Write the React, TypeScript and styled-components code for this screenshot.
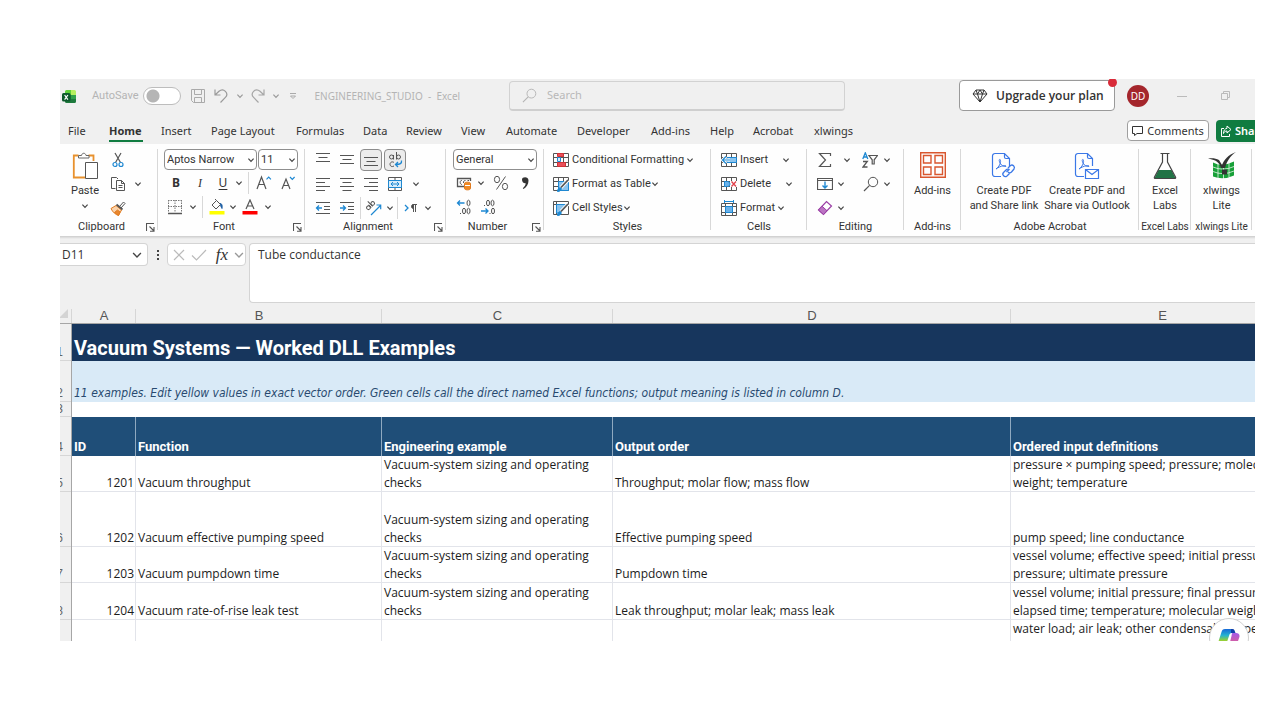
import React from 'react';
import styled, { createGlobalStyle, css } from 'styled-components';

const ui = '"Noto Sans", "Open Sans", sans-serif';
const compact = 'Roboto, "Open Sans", sans-serif';
const ink = '#333333';
const blue = '#1e88d2';

const GlobalStyle = createGlobalStyle`
  *, *::before, *::after { box-sizing: border-box; }
  body { margin: 0; background: #ffffff; }
  button, input, select, textarea { font: inherit; color: inherit; margin: 0; }
  button { border: 0; padding: 0; background: none; }
  svg { display: block; flex: none; }
`;

const Page = styled.main`
  display: flex;
  height: 100vh;
  padding: 79px 25px 79px 60px;
`;

const Window = styled.div`
  position: relative;
  display: flex;
  flex: 1;
  flex-direction: column;
  min-width: 0;
  overflow: hidden;
  background: #f0f0f0;
  color: ${ink};
  font: 11px/16px ${ui};
`;

/* ---------- title bar ---------- */

const TitleBar = styled.header`
  display: flex;
  flex: none;
  align-items: center;
  height: 33px;
  padding-right: 24px;
`;

const TitleLeft = styled.div`
  display: flex;
  flex: 0 0 449px;
  align-items: center;
  padding-left: 2px;
  color: #b4b4b4;
`;

const AutoSave = styled.label`
  display: flex;
  align-items: center;
  gap: 5px;
  margin: 0 9px 0 15px;
  font-family: ${compact};
`;

const Toggle = styled.input`
  appearance: none;
  width: 38px;
  height: 18px;
  border: 1px solid #bdbdbd;
  border-radius: 9px;
  background: radial-gradient(circle at 9px 8px, #b5b5b5 6px, #ffffff 7px);
`;

const QuickButton = styled.button<{ $w: number }>`
  display: flex;
  align-items: center;
  justify-content: center;
  width: ${(p) => p.$w}px;
  height: 20px;
`;

const FileTitle = styled.span`
  margin-left: 8px;
  font: 10px/16px ${ui};
  white-space: pre;
`;

const SearchBox = styled.label`
  display: flex;
  flex: 0 1 336px;
  align-items: center;
  gap: 10px;
  height: 30px;
  padding-left: 12px;
  border: 1px solid #d2d2d2;
  border-bottom: 2px solid #cfcfcf;
  border-radius: 4px;
  color: #b4b4b4;

  input {
    width: 100%;
    padding: 0;
    border: 0;
    outline: 0;
    background: none;
    &::placeholder { color: #b8b8b8; opacity: 1; }
  }
`;

const Spacer = styled.div`
  flex: 1;
`;

const Upgrade = styled.button`
  position: relative;
  display: flex;
  align-items: center;
  gap: 8px;
  width: 156px;
  height: 31px;
  padding-left: 12px;
  border: 1px solid #9a9a9a;
  border-radius: 4px;
  background: #ffffff;
  font: 600 12px/16px "Open Sans", sans-serif;
  white-space: nowrap;

  &::after {
    content: '';
    position: absolute;
    top: -3px;
    right: -3px;
    width: 9px;
    height: 9px;
    border-radius: 50%;
    background: #d92c3a;
  }
`;

const Avatar = styled.button`
  width: 22px;
  height: 22px;
  margin: 0 28px 0 12px;
  border-radius: 50%;
  background: #a4262c;
  color: #ffffff;
  font-size: 10px;
`;

const WindowButton = styled.button`
  & + & { margin-left: 33px; }
`;

/* ---------- tabs ---------- */

const TabBar = styled.nav`
  display: flex;
  flex: none;
  align-items: center;
  height: 32px;
  padding: 5px 0 0 8px;
`;

const Tab = styled.button<{ $w: number; $active?: boolean }>`
  width: ${(p) => p.$w}px;
  height: 22px;
  text-align: left;
  white-space: nowrap;
  ${(p) =>
    p.$active &&
    css`
      font-weight: 700;
      background: linear-gradient(#107c41, #107c41) 0 100% / 34px 2px no-repeat;
    `}
`;

const Comments = styled.button`
  display: flex;
  flex: none;
  align-items: center;
  justify-content: center;
  gap: 4px;
  width: 82px;
  height: 21px;
  border: 1px solid #9f9f9f;
  border-radius: 4px;
  background: #ffffff;
`;

const ShareClip = styled.div`
  flex: 0 0 39px;
  margin-left: 7px;
  overflow: hidden;
`;

const Share = styled.button`
  display: flex;
  align-items: center;
  gap: 3px;
  width: 72px;
  height: 22px;
  padding-left: 4px;
  border-radius: 4px;
  background: #107c41;
  color: #ffffff;
  font-weight: 600;
`;

/* ---------- ribbon ---------- */

const Ribbon = styled.section`
  display: flex;
  flex: none;
  height: 92px;
  padding-top: 4px;
  overflow: hidden;
  background: #fefefe;
  font-family: ${compact};
`;

const RibbonShadow = styled.div`
  flex: none;
  height: 3px;
  background: linear-gradient(#cccccc, #f0f0f0);
`;

const GroupBox = styled.div<{ $w: number }>`
  display: flex;
  flex: 0 0 ${(p) => p.$w}px;
  flex-direction: column;
  background: linear-gradient(#d8d8d8, #d8d8d8) 100% 1px / 1px 81px no-repeat;
`;

const GroupBody = styled.div<{ $row?: boolean }>`
  display: flex;
  flex-direction: ${(p) => (p.$row ? 'row' : 'column')};
  height: 71px;
`;

const GroupLabel = styled.div<{ $launch?: boolean; $small?: boolean }>`
  display: grid;
  grid-template-columns: ${(p) => (p.$launch ? '1fr 15px' : '1fr')};
  align-items: center;
  justify-items: center;
  height: 16px;
  font-size: ${(p) => (p.$small ? 10 : 11)}px;
  white-space: nowrap;
`;

const Row = styled.div<{ $pad?: number }>`
  display: flex;
  align-items: center;
  height: 24px;
  padding-left: ${(p) => p.$pad ?? 0}px;
`;

const Slot = styled.button<{ $w?: number; $on?: boolean }>`
  display: flex;
  flex: none;
  align-items: center;
  justify-content: center;
  width: ${(p) => p.$w ?? 24}px;
  height: 24px;
  ${(p) =>
    p.$on &&
    css`
      width: 22px;
      height: 22px;
      margin: 0 1px;
      border: 1px solid #8c8c8c;
      border-radius: 4px;
      background: #ececec;
    `}
`;

const Rule = styled.span<{ $gap?: number }>`
  width: 1px;
  height: 22px;
  margin: 0 ${(p) => p.$gap ?? 3}px;
  background: #d8d8d8;
`;

const Gap = styled.span<{ $w: number }>`
  flex: 0 0 ${(p) => p.$w}px;
`;

const Letter = styled.span<{ $bold?: boolean; $italic?: boolean; $under?: boolean }>`
  font: ${(p) => (p.$italic ? 'italic' : 'normal')} ${(p) => (p.$bold ? 700 : 400)} 12px/16px
    ${(p) => (p.$italic ? '"Liberation Serif", serif' : ui)};
  text-decoration: ${(p) => (p.$under ? 'underline' : 'none')};
  text-underline-offset: 2px;
`;

const PickBox = styled.label<{ $w: number }>`
  display: flex;
  align-items: center;
  width: ${(p) => p.$w}px;
  height: 21px;
  padding: 0 1px 0 2px;
  margin-right: 1px;
  border: 1px solid #8f8f8f;
  border-radius: 4px;
  background: #ffffff;

  select {
    appearance: none;
    flex: 1;
    min-width: 0;
    padding: 0;
    border: 0;
    outline: 0;
    background: none;
  }
`;

const WideButton = styled.button<{ $gap?: number }>`
  display: flex;
  align-items: center;
  height: 24px;
  white-space: nowrap;
  svg:first-child { margin-right: 3px; }
  svg:last-child { margin-left: ${(p) => p.$gap ?? 2}px; }
`;

const BigButton = styled.button<{ $w: number }>`
  display: flex;
  flex: none;
  flex-direction: column;
  align-items: center;
  width: ${(p) => p.$w}px;
  padding-top: 4px;
  line-height: 15px;
  white-space: nowrap;
  svg:first-child { margin-bottom: 3px; }
`;

const PasteLabel = styled.span`
  margin-bottom: 4px;
`;

const Stack = styled.div`
  display: flex;
  flex-direction: column;
`;

/* ---------- formula bar ---------- */

const FormulaBar = styled.section`
  display: flex;
  flex: none;
  align-items: flex-start;
  height: 67px;
  padding-top: 4px;
  font: 12px/18px "Open Sans", sans-serif;
`;

const NameBox = styled.label`
  display: flex;
  align-items: center;
  width: 88px;
  height: 23px;
  padding: 0 4px 0 2px;
  border: 1px solid #d4d4d4;
  border-left: 0;
  border-radius: 0 4px 4px 0;
  background: #ffffff;

  input {
    flex: 1;
    min-width: 0;
    padding: 0;
    border: 0;
    outline: 0;
  }
`;

const Dots = styled.span`
  display: flex;
  justify-content: center;
  width: 19px;
  padding-top: 6px;
`;

const FormulaTools = styled.div`
  display: flex;
  align-items: center;
  justify-content: space-between;
  width: 79px;
  height: 23px;
  padding: 0 0 0 4px;
  border: 1px solid #d4d4d4;
  border-radius: 4px;
  background: #ffffff;
`;

const Fx = styled.button`
  margin-left: 4px;
  font: italic 17px/18px "Liberation Serif", serif;
`;

const FormulaInput = styled.textarea`
  flex: 1;
  height: 60px;
  margin-left: 3px;
  padding: 2px 8px;
  border: 1px solid #d4d4d4;
  border-right: 0;
  border-radius: 4px 0 0 4px;
  outline: 0;
  background: #ffffff;
  resize: none;
`;

/* ---------- sheet ---------- */

const Sheet = styled.div`
  flex: 1;
  min-height: 0;
  overflow: hidden;
`;

const Grid = styled.table`
  width: 1266px;
  margin-left: -12px;
  border-spacing: 0;
  table-layout: fixed;
  background: #ffffff;
  color: #1c1c1c;
  font: 12px/18px "Open Sans", sans-serif;
`;

const Col = styled.col<{ $w: number }>`
  width: ${(p) => p.$w}px;
`;

const ColumnHead = styled.th`
  height: 18px;
  padding: 3px 0 0;
  border-bottom: 1px solid #a6a6a6;
  background: linear-gradient(#d6d6d6, #d6d6d6) 100% 100% / 1px 14px no-repeat #f0f0f0;
  color: #555555;
  font: 13px/14px "Liberation Sans", sans-serif;
`;

const Corner = styled(ColumnHead)`
  padding: 0 4px 3px 0;
  svg { margin-left: auto; }
`;

const Line = styled.tr<{ $h: number }>`
  height: ${(p) => p.$h}px;
`;

const RowHead = styled.th<{ $short?: boolean }>`
  padding: 0;
  border-right: 1px solid #a6a6a6;
  background: linear-gradient(#d6d6d6, #d6d6d6) 0 100% / 100% 1px no-repeat #f0f0f0;
  color: #666666;
  vertical-align: bottom;
  font: 12px/${(p) => (p.$short ? 15 : 18)}px "Liberation Sans", sans-serif;
`;

const Cell = styled.td<{ $right?: boolean; $top?: boolean }>`
  padding: 0 2px;
  overflow: hidden;
  box-shadow: inset -1px -1px #e2e4ea;
  text-align: ${(p) => (p.$right ? 'right' : 'left')};
  vertical-align: ${(p) => (p.$top ? 'top' : 'bottom')};
  white-space: pre;
`;

const TitleCell = styled.td`
  padding: 0 2px;
  background: #17365d;
  color: #ffffff;
  vertical-align: bottom;
  font: 700 20px/26px Roboto, sans-serif;
`;

const NoteCell = styled.td`
  padding: 0 2px;
  background: #d9eaf7;
  color: #294a70;
  vertical-align: bottom;
  font: italic 12px/18px "DejaVu Sans Condensed", "DejaVu Sans", sans-serif;
`;

const FieldHead = styled.th`
  padding: 0 2px;
  background: #1f4e78;
  box-shadow: inset -1px 0 #8fa9c0;
  color: #ffffff;
  text-align: left;
  vertical-align: bottom;
  font: 700 13px/18px Roboto, sans-serif;
`;

const Copilot = styled.button`
  position: absolute;
  right: 6px;
  bottom: -17px;
  display: flex;
  justify-content: center;
  width: 40px;
  height: 40px;
  padding-top: 9px;
  border: 1px solid #d0d0d0;
  border-radius: 50%;
  background: #ffffff;
`;

/* ---------- drawings ---------- */

type DrawingProps = { w?: number; h?: number; box?: string; children: React.ReactNode; color?: string };
const Drawing = ({ w = 16, h = 16, box = '0 0 16 16', color = '#555', children }: DrawingProps) => (
  <svg width={w} height={h} viewBox={box} fill="none" stroke={color} strokeWidth="1" aria-hidden="true">
    {children}
  </svg>
);

const Chevron = ({ color = '#444', size = 8 }: { color?: string; size?: number }) => (
  <svg width={size} height={size} viewBox="0 0 8 8" fill="none" stroke={color} strokeWidth={size > 8 ? 0.9 : 1.2} aria-hidden="true">
    <path d="M1.4 2.7 4 5.3l2.6-2.6" />
  </svg>
);

const ExcelLogo = () => (
  <Drawing w={15} h={16} box="0 0 15 16" color="none">
    <path d="M3 3.5A1.5 1.5 0 0 1 4.500 2H9v5H3z" fill="#5fd03b" />
    <path d="M9 2h3.500A1.500 1.500 0 0 1 14 3.500V7H9z" fill="#b5ef5f" />
    <path d="M3 7h11v6.500a1.500 1.500 0 0 1-1.500 1.500h-8A1.500 1.500 0 0 1 3 13.500z" fill="#1d7a3d" />
    <path d="M9 7h5v4H9z" fill="#2fa14a" />
    <rect x="0" y="5" width="8.500" height="8.500" rx="1.500" fill="#0d5a2c" />
    <path d="m2.600 7 3.300 4.600M5.900 7l-3.300 4.600" stroke="#fff" strokeWidth="1.200" />
  </Drawing>
);

const SaveIcon = () => (
  <Drawing color="#aaa"><path d="M1.500 1.500h13v13h-11l-2-2zM4.500 1.500v5h7v-5M4.500 14.500v-5h7v5" /></Drawing>
);
const UndoIcon = () => (
  <Drawing color="#9a9a9a"><path d="M2 1.500V7h5.500M2.300 6.700 6 3.300c2-1.800 4.600-1.800 6.400 0 1.800 1.900 1.800 4.300 0 6.100L7.500 14.500" strokeWidth="1.200" /></Drawing>
);
const RedoIcon = () => (
  <Drawing color="#a6a6a6"><path d="M14 1.500V7H8.500M13.700 6.700 10 3.300c-2-1.800-4.600-1.800-6.400 0-1.800 1.900-1.800 4.300 0 6.100l4.900 5.100" strokeWidth="1.200" /></Drawing>
);
const MoreIcon = () => (
  <Drawing w={8} h={8} box="0 0 8 8" color="#aaa"><path d="M1 1.500h6M1.500 4 4 6.500 6.500 4z" /></Drawing>
);
const SearchIcon = ({ color, size = 15 }: { color: string; size?: number }) => (
  <Drawing w={size} h={size} color={color}><circle cx="10" cy="6" r="4.700" /><path d="M6.600 9.400 1 15" strokeWidth="1.200" /></Drawing>
);
const DiamondIcon = () => (
  <Drawing color="#333"><path d="M4 2h8l3 4-7 8L1 6zM1 6h14M5.500 6 8 14 10.500 6 8 2 5.500 6 4 2M10.500 6 12 2" /></Drawing>
);
const CommentIcon = () => (
  <Drawing w={11} h={11} box="0 0 11 11" color="#333"><path d="M.500 1.500h10v7H5L2.500 10.500v-2h-2z" /></Drawing>
);
const ShareIcon = () => (
  <Drawing w={12} h={12} box="0 0 12 12" color="#fff"><path d="M4 3.500H1.500v8h8V9M7 1l4 3.500L7 8V6C5 6 4 7 3.500 8.500 3.500 5.500 5 3.500 7 3.300z" /></Drawing>
);

const PasteIcon = () => (
  <Drawing w={26} h={28} box="0 1 26 28" color="#e8912d">
    <path d="M6.500 4.500h-4.700v22H13M16.500 4.500h5V10" strokeWidth="1.800" />
    <path d="M6.500 7V4.500h3c.5-3 4-3 4.500 0h3V7z" stroke="#666" fill="#fff" />
    <path d="M13.500 11.500h12v16h-12z" stroke="#555" fill="#fff" />
  </Drawing>
);
const CutIcon = () => (
  <Drawing>
    <path d="m5 1 5.500 9.500M11 1 5.500 10.500" strokeWidth="1.200" />
    <circle cx="5" cy="12.500" r="2" stroke={blue} strokeWidth="1.200" />
    <circle cx="11" cy="12.500" r="2" stroke={blue} strokeWidth="1.200" />
  </Drawing>
);
const CopyIcon = () => (
  <Drawing><path d="M5.500 12.500h-4v-11h5l1.500 1.500M6.500 4.500h5l3 3v7h-8zM11.500 4.500v3h3M8.500 9.500h4M8.500 11.500h4" /></Drawing>
);
const BrushIcon = () => (
  <Drawing>
    <path d="m9.500 6.500 4-4.500 1.500 1.500-4 4.500" />
    <path d="M1 8.500 6 5.500l5.500 4.500-3 5.500C5.500 14.500 2.500 12 1 8.500z" stroke="#e07a1f" fill="#fbd3ab" />
    <path d="M4.500 12.500 7.500 10 10 12l-1.500 3.500z" stroke="#e07a1f" fill="#e8862d" />
    <path d="m6.500 4.500 6 5" strokeWidth="1.800" />
  </Drawing>
);
const GrowIcon = ({ shrink = false }: { shrink?: boolean }) => (
  <Drawing>
    <path d={shrink ? 'm2 14 4-10 4 10M3.500 10.500h5' : 'm1 14 4.500-12L10 14M2.700 9.500h5.600'} strokeWidth="1.200" />
    <path d={shrink ? 'm10 2 2.300 2.300L14.600 2' : 'm10.500 4.300 2.200-2.200 2.200 2.200'} stroke={blue} strokeWidth="1.200" />
  </Drawing>
);
const BordersIcon = () => (
  <Drawing>
    <path d="M1.500 1v12M8 1v12M14.500 1v12M1 1.500h14M1 7.500h14" stroke="#777" strokeDasharray="1.500 1" />
    <path d="M1 14.500h14" strokeWidth="1.500" />
  </Drawing>
);
const FillIcon = () => (
  <Drawing>
    <path d="m3 6 4.500-4.500 4 4-4.500 4.500zM7.500 1.500 6 0" />
    <path d="M11 4.500c2 0 2.500 2 2 5-.8-1.500-1.500-2.500-1.500-4" stroke="#1d5fa5" fill="#1d5fa5" />
    <path d="M.500 12h15v3.500H.500z" fill="#ffff00" stroke="none" />
  </Drawing>
);
const FontColorIcon = () => (
  <Drawing>
    <path d="m4 10 4-9 4 9M5.500 7h5" strokeWidth="1.200" />
    <path d="M.500 12h15v3.500H.500z" fill="#ff0000" stroke="none" />
  </Drawing>
);
const LinesIcon = ({ d }: { d: string }) => <Drawing><path d={d} strokeWidth="1.200" /></Drawing>;
const IndentIcon = ({ out = false }: { out?: boolean }) => (
  <Drawing>
    <path d="M1 2.500h14M9 6.500h6M9 9.500h6M1 13.500h14" />
    <path d={out ? 'M7 8H1.500M4 5.500 1.500 8 4 10.500' : 'M1 8h5.500M4 5.500 6.500 8 4 10.500'} stroke={blue} strokeWidth="1.300" />
  </Drawing>
);
const WrapIcon = () => (
  <Drawing>
    <ellipse cx="4.500" cy="5" rx="2" ry="2" /><path d="M6.500 3v4.500M9.500 0v7.500" />
    <circle cx="11.500" cy="5" r="2" /><path d="M7 10.500c-2-1.500-4 0-4 1.800 0 1.900 2 3 4 1.700" />
    <path d="M14.500 8.500c.5 3-1.500 4-5.500 4M11 10l-2.500 2.500L11 15" stroke={blue} strokeWidth="1.300" />
  </Drawing>
);
const MergeIcon = () => (
  <Drawing>
    <path d="M1.500 1.500h13v13h-13zM8 1v3M8 12v3" /><path d="M1.500 4.500h13v7h-13z" fill="#d7ecfa" stroke={blue} />
    <path d="M4 8h8M6 6 4 8l2 2M10 6l2 2-2 2" stroke={blue} />
  </Drawing>
);
const OrientIcon = () => (
  <Drawing>
    <g transform="rotate(-45 6 7)"><circle cx="3" cy="5" r="1.800" /><path d="M5 3v4M7 0v7" /><circle cx="9" cy="5" r="1.800" /></g>
    <path d="M5 15 14.500 5.500M10.500 5h4.200v4.200" stroke={blue} strokeWidth="1.200" />
  </Drawing>
);
const DirectionIcon = () => (
  <Drawing>
    <path d="m2 5 3 3-3 3" stroke={blue} strokeWidth="1.300" />
    <path d="M10.500 12V4.500M12.500 12V4.500M14 4.500H9.500" /><path d="M10.500 4.500a2 2 0 0 0 0 4z" fill="#444" />
  </Drawing>
);
const MoneyIcon = () => (
  <Drawing>
    <path d="M8 11.500H1.500v-8h13V6" strokeWidth="1.300" /><path d="M6 5.500c-2.500-.5-2.500 4 0 4M9.500 5.500c-2 0-2 1-2 2.500M11.500 5.500h1.500" />
    <path d="M8.500 8.500c0-1.800 6-1.800 6 0v5c0 1.800-6 1.800-6 0z" stroke="#e07a1f" fill="#f08a24" /><path d="M9 10.500h5" stroke="#fff" />
  </Drawing>
);
const PercentIcon = () => (
  <Drawing><ellipse cx="4" cy="4.500" rx="2.600" ry="3.200" /><ellipse cx="12" cy="11.500" rx="2.600" ry="3.200" /><path d="M12.500 1.500 3.500 14.500" /></Drawing>
);
const CommaIcon = () => (
  <Drawing color="none"><path d="M5 4.500C5 1.500 11.500 1 11.500 5.500c0 4-2 6.500-5 8.500l-.7-.8c1.700-1.500 2.700-3 2.900-5C6.500 8.500 5 7 5 4.500z" fill="#333" /></Drawing>
);
const DecimalIcon = ({ less = false }: { less?: boolean }) => (
  <Drawing>
    {less ? (
      <>
        <ellipse cx="8" cy="4" rx="1.500" ry="2.800" /><ellipse cx="12.500" cy="4" rx="1.500" ry="2.800" /><ellipse cx="13" cy="12" rx="1.500" ry="2.800" />
        <path d="M4.500 6v1M10 14v1" /><path d="M1 12h7M5.500 9.500 8 12l-2.500 2.500" stroke={blue} strokeWidth="1.300" />
      </>
    ) : (
      <>
        <ellipse cx="12.500" cy="4" rx="1.500" ry="2.800" /><ellipse cx="8" cy="12" rx="1.500" ry="2.800" /><ellipse cx="12.500" cy="12" rx="1.500" ry="2.800" />
        <path d="M4.500 14v1" /><path d="M8.500 4h-7M4 1.500 1.500 4 4 6.500" stroke={blue} strokeWidth="1.300" />
      </>
    )}
  </Drawing>
);
const grid = 'M.500 1.500h15v13H.500zM.500 5.500h15M.500 10.500h15M5.500 1.500v13M10.500 1.500v13';
const ConditionalIcon = () => (
  <Drawing><path d={grid} /><path d="M4.500 1.500h6v3h-6zM4.500 10.500h8v4h-8z" fill="#e8505b" stroke="#d13438" /><path d="M4.500 5.500h3v4h-3z" fill="#d7ecfa" stroke={blue} /></Drawing>
);
const TableStyleIcon = ({ single = false }: { single?: boolean }) => (
  <Drawing>
    <path d={single ? 'M.500 1.500h15v13H.500zM.500 4.500h15M3.500 1.500v13' : grid} />
    <path d={single ? 'M3.500 4.500h9L6 13H3.500z' : 'M5.500 5.500h10v9h-10z'} fill="#8cc4ee" stroke={blue} />
    <path d="m15 4-7 7.500" stroke="#fff" strokeWidth="3.500" /><path d="m15 4-7 7.500" strokeWidth="1.800" />
    <path d="M4.500 15.500c.3-3 1.500-4 3.500-3.500.8 2-1 3.500-3.500 3.500z" fill={blue} stroke={blue} />
  </Drawing>
);
const InsertIcon = () => (
  <Drawing><path d={grid} /><path d="M6 5.500h9.500v5H6z" fill="#8cc4ee" stroke={blue} /><path d="M9 8H1.500M5 4.500 1.500 8 5 11.500" stroke="#fff" strokeWidth="3" /><path d="M9 8H1.500M5 4.500 1.500 8 5 11.500" stroke={blue} strokeWidth="1.200" /></Drawing>
);
const DeleteIcon = () => (
  <Drawing><path d={grid} /><path d="M9 5h7v6H9z" fill="#fff" stroke="none" /><path d="M3.500 5.500h3a2.500 2.500 0 0 1 0 5h-3z" fill="#6bb1e8" stroke={blue} /><path d="m10.500 5.500 4.500 5M15 5.500l-4.500 5" stroke="#e0414b" strokeWidth="1.300" /></Drawing>
);
const FormatIcon = () => (
  <Drawing><path d="M.500 3.500h15v12H.500zM.500 6.500h15M.500 12.500h15M4.500 3.500v12M11.500 3.500v12" /><path d="M4.500 6.500h7v6h-7z" fill="#6bb1e8" stroke={blue} /><path d="M3.500 1.500h9M3.500 0v3M12.500 0v3" stroke={blue} /></Drawing>
);
const SumIcon = () => <Drawing><path d="M13.500 4V1.500h-11L8.500 8l-6 6.500h11V12" strokeWidth="1.200" /></Drawing>;
const SortIcon = () => (
  <Drawing>
    <path d="M.800 7 3.300.800 5.800 7M1.600 5h3.400" stroke={blue} strokeWidth="1.300" /><path d="M1 9.500h4.300L1 15h4.500" strokeWidth="1.300" />
    <path d="M7 3.500h8.500l-3.300 4.300V12h-2V7.800z" strokeWidth="1.200" />
  </Drawing>
);
const FillDownIcon = () => (
  <Drawing><path d="M.500 2.500h15v11H.500zM.500 4.500h15" strokeWidth="1.200" /><path d="M8 5.500V12M5.500 9.500 8 12l2.500-2.500" stroke={blue} strokeWidth="1.400" /></Drawing>
);
const EraserIcon = () => (
  <Drawing color="#9b3fa5"><path d="m1.500 10 8-8.500 5 4.500-8 8.500z" fill="#fff" strokeWidth="1.200" /><path d="m1.500 10 3.500-3.800 5 4.500-3.500 3.800z" fill="#bb74c3" /></Drawing>
);
const AddinsIcon = () => (
  <Drawing w={26} h={28} box="0 0 26 28" color="#d9572f"><path d="M.700.700h24.600v24.600H.700zM3.500 3.500h7.500V11H3.500zM15 3.500h7.500V11H15zM3.500 15h7.500v7.500H3.500zM15 15h7.500v7.500H15z" strokeWidth="1.400" /></Drawing>
);
const PdfIcon = ({ mail = false }: { mail?: boolean }) => (
  <Drawing w={26} h={28} box="0 0 26 28" color="#3b78e7">
    <path d="M10 24.500H4A2.500 2.500 0 0 1 1.500 22V4A2.500 2.500 0 0 1 4 1.500h9.500l5 5V14M13.500 1.500V5q0 1.500 1.500 1.500h3.500" strokeWidth="1.200" />
    <path d="M5 17c3-2 5-6 4.500-8.500 0-1.500-1.500-1.300-1.300 0 .5 3.500 3.500 6.500 6.800 5.800.8-1-4.500-1.300-10 2.700z" />
    {mail ? (
      <path d="M11.500 17.500h13v9h-13zM11.500 17.500l6.500 5 6.500-5" fill="#fff" strokeWidth="1.200" />
    ) : (
      <path d="m15.500 20 3-3M17 16l2.500-2.500c2-1.500 5 1 3.500 3.500L20.500 20c-1 1-2.500 1-3.500 0M18.500 18c-1-1-2.500-1-3.500 0L12.500 20.500c-2 2 1 5.500 3.500 3.500L18.500 21.500" strokeWidth="1.300" />
    )}
  </Drawing>
);
const FlaskIcon = () => (
  <Drawing w={24} h={28} box="0 0 24 28" color="#444">
    <path d="M5.500 18h13l4 8H1.500z" fill="#217346" stroke="none" />
    <path d="M7.500 1.500h9M9.500 1.500v8.500L1.500 25c-.5 1 0 1.500 1 1.500h19c1 0 1.500-.5 1-1.500l-8-15V1.500" strokeWidth="1.200" />
  </Drawing>
);
const XlwingsIcon = () => (
  <Drawing w={28} h={28} box="0 0 28 28" color="none">
    <path d="M5 10.500q9 5 21-1v14q-11 5-21 1z" fill="#18a038" />
    <path d="M5 15q10 4.500 21-.500M5 19.500q10 4.500 21-.500M10 11v15M15.500 12v15M21 11v14" stroke="#fff" strokeWidth=".700" />
    <path d="M0 6.500c5-.5 8 0 11 1.500l3 5C16 8 20 3 28 0c-6 4-9 9-11 16h-4C11.500 11 9 8 0 6.500z" fill="#333" />
    <path d="M14 17.500h5v5h-5z" fill="#333" />
  </Drawing>
);
const LauncherIcon = () => (
  <Drawing w={9} h={9} box="0 0 9 9"><path d="M.500 8V.500H8M3.500 3.500 8 8M8 4v4.200H4" strokeWidth="1.100" /></Drawing>
);

/* ---------- pieces ---------- */

const Launcher = ({ name }: { name: string }) => (
  <button aria-label={`${name} settings`}><LauncherIcon /></button>
);

type GroupProps = { name: string; w: number; launch?: boolean; row?: boolean; small?: boolean; children: React.ReactNode };
const Group = ({ name, w, launch, row, small, children }: GroupProps) => (
  <GroupBox $w={w}>
    <GroupBody $row={row}>{children}</GroupBody>
    <GroupLabel $launch={launch} $small={small}>
      <span>{name}</span>
      {launch && <Launcher name={name} />}
    </GroupLabel>
  </GroupBox>
);

const Pick = ({ label, value, w }: { label: string; value: string; w: number }) => (
  <PickBox $w={w}>
    <select aria-label={label} defaultValue={value}><option>{value}</option></select>
    <Chevron />
  </PickBox>
);

const More = ({ w = 10 }: { w?: number }) => (
  <Slot $w={w} aria-label="More options"><Chevron /></Slot>
);

const tabs: [string, number][] = [
  ['File', 41], ['Home', 52], ['Insert', 50], ['Page Layout', 85], ['Formulas', 67], ['Data', 43],
  ['Review', 55], ['View', 45], ['Automate', 71], ['Developer', 74], ['Add-ins', 59], ['Help', 43],
  ['Acrobat', 61], ['xlwings', 50],
];

const sizing = 'Vacuum-system sizing and operating\nchecks';
const rows: { n: number; h: number; cells: string[] }[] = [
  { n: 5, h: 36, cells: ['1201', 'Vacuum throughput', sizing, 'Throughput; molar flow; mass flow', 'pressure × pumping speed; pressure; molecular\nweight; temperature'] },
  { n: 6, h: 55, cells: ['1202', 'Vacuum effective pumping speed', sizing, 'Effective pumping speed', 'pump speed; line conductance'] },
  { n: 7, h: 36, cells: ['1203', 'Vacuum pumpdown time', sizing, 'Pumpdown time', 'vessel volume; effective speed; initial pressure; final\npressure; ultimate pressure'] },
  { n: 8, h: 37, cells: ['1204', 'Vacuum rate-of-rise leak test', sizing, 'Leak throughput; molar leak; mass leak', 'vessel volume; initial pressure; final pressure;\nelapsed time; temperature; molecular weight'] },
  { n: 9, h: 54, cells: ['', '', '', '', 'water load; air leak; other condensable; operating'] },
];

export default function App() {
  return (
    <Page>
      <GlobalStyle />
      <Window>
        <TitleBar>
          <TitleLeft>
            <ExcelLogo />
            <AutoSave>AutoSave<Toggle type="checkbox" /></AutoSave>
            <QuickButton $w={16} aria-label="Save"><SaveIcon /></QuickButton>
            <QuickButton $w={30} aria-label="Undo"><UndoIcon /></QuickButton>
            <Chevron color="#999" />
            <QuickButton $w={28} aria-label="Redo"><RedoIcon /></QuickButton>
            <Chevron color="#999" />
            <QuickButton $w={26} aria-label="Customize toolbar"><MoreIcon /></QuickButton>
            <FileTitle>{'ENGINEERING_STUDIO  -  Excel'}</FileTitle>
          </TitleLeft>
          <SearchBox>
            <SearchIcon color="#b4b4b4" />
            <input aria-label="Search" placeholder="Search" />
          </SearchBox>
          <Spacer />
          <Upgrade><DiamondIcon />Upgrade your plan</Upgrade>
          <Avatar>DD</Avatar>
          <WindowButton aria-label="Minimize"><Drawing w={10} h={10} box="0 0 10 10" color="#bbb"><path d="M0 5.500h10" /></Drawing></WindowButton>
          <WindowButton aria-label="Restore"><Drawing w={11} h={11} box="0 0 11 11" color="#bbb"><path d="M1.500 3.500h6v6h-6zM3.500 3V1.500h6v6H8" /></Drawing></WindowButton>
        </TitleBar>

        <TabBar>
          {tabs.map(([t, w]) => <Tab key={t} $w={w} $active={t === 'Home'}>{t}</Tab>)}
          <Spacer />
          <Comments><CommentIcon />Comments</Comments>
          <ShareClip><Share><ShareIcon />Share</Share></ShareClip>
        </TabBar>

        <Ribbon>
          <Group name="Clipboard" w={98} launch row>
            <BigButton $w={50}><PasteIcon /><PasteLabel>Paste</PasteLabel><Chevron /></BigButton>
            <Stack>
              <Row><Slot $w={15} aria-label="Cut"><CutIcon /></Slot></Row>
              <Row><Slot $w={15} aria-label="Copy"><CopyIcon /></Slot><More w={26} /></Row>
              <Row><Slot $w={15} aria-label="Format painter"><BrushIcon /></Slot></Row>
            </Stack>
          </Group>

          <Group name="Font" w={147} launch>
            <Row $pad={6}><Pick label="Font" value="Aptos Narrow" w={93} /><Pick label="Font size" value="11" w={40} /></Row>
            <Row $pad={6}>
              <Slot aria-label="Bold"><Letter $bold>B</Letter></Slot>
              <Slot aria-label="Italic"><Letter $italic>I</Letter></Slot>
              <Slot $w={22} aria-label="Underline"><Letter $under>U</Letter></Slot>
              <More /><Rule $gap={4} />
              <Slot $w={22} aria-label="Grow font"><GrowIcon /></Slot>
              <Slot $w={26} aria-label="Shrink font"><GrowIcon shrink /></Slot>
            </Row>
            <Row $pad={5}>
              <Slot aria-label="Borders"><BordersIcon /></Slot><More w={12} /><Rule />
              <Slot $w={22} aria-label="Fill color"><FillIcon /></Slot><More w={10} />
              <Slot aria-label="Font color"><FontColorIcon /></Slot><More w={12} />
            </Row>
          </Group>

          <Group name="Alignment" w={141} launch>
            <Row $pad={6}>
              <Slot aria-label="Top align"><LinesIcon d="M1 1.500h14M3.500 5.500h9M1 9.500h14" /></Slot>
              <Slot aria-label="Middle align"><LinesIcon d="M1 3.500h14M3.500 7.500h9M1 11.500h14" /></Slot>
              <Slot $on aria-label="Bottom align"><LinesIcon d="M1 5.500h14M3.500 9.500h9M1 13.500h14" /></Slot>
              <Slot $on aria-label="Wrap text"><WrapIcon /></Slot>
            </Row>
            <Row $pad={6}>
              <Slot aria-label="Align left"><LinesIcon d="M1 2.500h14M1 6.500h9M1 10.500h14M1 14.500h9" /></Slot>
              <Slot aria-label="Center"><LinesIcon d="M1 2.500h14M3.500 6.500h9M1 10.500h14M3.500 14.500h9" /></Slot>
              <Slot aria-label="Align right"><LinesIcon d="M1 2.500h14M6 6.500h9M1 10.500h14M6 14.500h9" /></Slot>
              <Slot aria-label="Merge"><MergeIcon /></Slot><More w={18} />
            </Row>
            <Row $pad={6}>
              <Slot aria-label="Decrease indent"><IndentIcon out /></Slot>
              <Slot aria-label="Increase indent"><IndentIcon /></Slot>
              <Rule $gap={1} />
              <Slot aria-label="Orientation"><OrientIcon /></Slot><More w={8} /><Rule />
              <Slot $w={20} aria-label="Text direction"><DirectionIcon /></Slot><More w={14} />
            </Row>
          </Group>

          <Group name="Number" w={98} launch>
            <Row $pad={7}><Pick label="Number format" value="General" w={84} /></Row>
            <Row $pad={6}>
              <Slot aria-label="Accounting"><MoneyIcon /></Slot><More />
              <Slot $w={30} aria-label="Percent"><PercentIcon /></Slot>
              <Slot $w={18} aria-label="Comma"><CommaIcon /></Slot>
            </Row>
            <Row $pad={6}>
              <Slot aria-label="Increase decimal"><DecimalIcon /></Slot>
              <Slot aria-label="Decrease decimal"><DecimalIcon less /></Slot>
            </Row>
          </Group>

          <Group name="Styles" w={167}>
            <Row $pad={9}><WideButton><ConditionalIcon />Conditional Formatting<Chevron /></WideButton></Row>
            <Row $pad={9}><WideButton $gap={0}><TableStyleIcon />Format as Table<Chevron /></WideButton></Row>
            <Row $pad={9}><WideButton $gap={0}><TableStyleIcon single />Cell Styles<Chevron /></WideButton></Row>
          </Group>

          <Group name="Cells" w={96}>
            <Row $pad={10}><WideButton $gap={14}><InsertIcon />Insert<Chevron /></WideButton></Row>
            <Row $pad={10}><WideButton $gap={14}><DeleteIcon />Delete<Chevron /></WideButton></Row>
            <Row $pad={10}><WideButton><FormatIcon />Format<Chevron /></WideButton></Row>
          </Group>

          <Group name="Editing" w={97}>
            <Row $pad={6}><Slot aria-label="AutoSum"><SumIcon /></Slot><More w={20} /><Slot $w={26} aria-label="Sort and filter"><SortIcon /></Slot><More w={8} /></Row>
            <Row $pad={6}><Slot aria-label="Fill"><FillDownIcon /></Slot><More w={8} /><Gap $w={14} /><Slot aria-label="Find"><SearchIcon color="#555" size={16} /></Slot><More w={8} /></Row>
            <Row $pad={6}><Slot aria-label="Clear"><EraserIcon /></Slot><More w={8} /></Row>
          </Group>

          <Group name="Add-ins" w={57} row>
            <BigButton $w={57}><AddinsIcon />Add-ins</BigButton>
          </Group>

          <Group name="Adobe Acrobat" w={178} row>
            <BigButton $w={86}><PdfIcon /><span>Create PDF<br />and Share link</span></BigButton>
            <BigButton $w={80}><PdfIcon mail /><span>Create PDF and<br />Share via Outlook</span></BigButton>
          </Group>

          <Group name="Excel Labs" w={52} row small>
            <BigButton $w={52}><FlaskIcon /><span>Excel<br />Labs</span></BigButton>
          </Group>

          <Group name="xlwings Lite" w={61} row small>
            <BigButton $w={61}><XlwingsIcon /><span>xlwings<br />Lite</span></BigButton>
          </Group>
        </Ribbon>
        <RibbonShadow />

        <FormulaBar>
          <NameBox><input aria-label="Name box" defaultValue="D11" /><Chevron size={12} /></NameBox>
          <Dots><Drawing w={4} h={12} box="0 0 4 12" color="none"><path d="M1 1h2v2H1zM1 5h2v2H1zM1 9h2v2H1z" fill="#444" /></Drawing></Dots>
          <FormulaTools>
            <button aria-label="Cancel"><Drawing w={14} h={14} box="0 0 14 14" color="#bbb"><path d="m2 2 10 10M12 2 2 12" strokeWidth="1.200" /></Drawing></button>
            <button aria-label="Enter"><Drawing w={16} h={14} box="0 0 16 14" color="#bbb"><path d="m1 7.500 4.500 4.500L15 2" strokeWidth="1.200" /></Drawing></button>
            <Fx>fx</Fx>
            <Chevron size={12} color="#999" />
          </FormulaTools>
          <FormulaInput aria-label="Formula" defaultValue="Tube conductance" />
        </FormulaBar>

        <Sheet>
          <Grid>
            <colgroup>
              <Col $w={24} /><Col $w={64} /><Col $w={246} /><Col $w={231} /><Col $w={398} /><Col $w={303} />
            </colgroup>
            <thead>
              <tr>
                <Corner><Drawing w={9} h={9} box="0 0 9 9" color="none"><path d="M9 0v9H0z" fill="#d4d4d4" /></Drawing></Corner>
                {['A', 'B', 'C', 'D', 'E'].map((c) => <ColumnHead key={c}>{c}</ColumnHead>)}
              </tr>
            </thead>
            <tbody>
              <Line $h={37}><RowHead>1</RowHead><TitleCell colSpan={5}>Vacuum Systems — Worked DLL Examples</TitleCell></Line>
              <Line $h={41}>
                <RowHead>2</RowHead>
                <NoteCell colSpan={5}>
                  11 examples. Edit yellow values in exact vector order. Green cells call the direct named Excel functions; output meaning is listed in column D.
                </NoteCell>
              </Line>
              <Line $h={15}><RowHead $short>3</RowHead><td colSpan={5} /></Line>
              <Line $h={39}>
                <RowHead>4</RowHead>
                {['ID', 'Function', 'Engineering example', 'Output order', 'Ordered input definitions'].map((f) => <FieldHead key={f}>{f}</FieldHead>)}
              </Line>
              {rows.map((r) => (
                <Line key={r.n} $h={r.h}>
                  <RowHead>{r.n}</RowHead>
                  {r.cells.map((c, i) => <Cell key={i} $right={i === 0} $top={r.n === 9}>{c}</Cell>)}
                </Line>
              ))}
            </tbody>
          </Grid>
        </Sheet>

        <Copilot aria-label="Copilot">
          <svg width="22" height="20" viewBox="0 0 22 20">
            <defs>
              <linearGradient id="cool" x1="0" y1="0" x2="0" y2="1"><stop offset="0" stopColor="#1668d8" /><stop offset=".4" stopColor="#25b3d0" /><stop offset=".7" stopColor="#8fcf3c" /><stop offset="1" stopColor="#f5c518" /></linearGradient>
              <linearGradient id="warm" x1="0" y1="0" x2="0" y2="1"><stop offset="0" stopColor="#a35be8" /><stop offset="1" stopColor="#f0607a" /></linearGradient>
            </defs>
            <path d="M7 1h7c1.500 0 2 1 2.400 2.500L17 5h-3c-2 0-2.500 1-3 3l-2 6c-.7 2-1.500 3-3 3H3c-2 0-3-1.500-2.400-4L3.500 4C4 2 5 1 7 1z" fill="url(#cool)" />
            <path d="M13 1h1.500c1.500 0 2 1 2.400 2.500L17.500 5H13z" fill="#123fa8" />
            <path d="M14.500 5H18c2.500 0 4 1.500 3.400 4L19 16c-.7 2-1.500 3-3.500 3H9c1.500 0 2-1 2.500-3l2-8c.3-1.500.4-3 1-3z" fill="url(#warm)" />
          </svg>
        </Copilot>
      </Window>
    </Page>
  );
}
